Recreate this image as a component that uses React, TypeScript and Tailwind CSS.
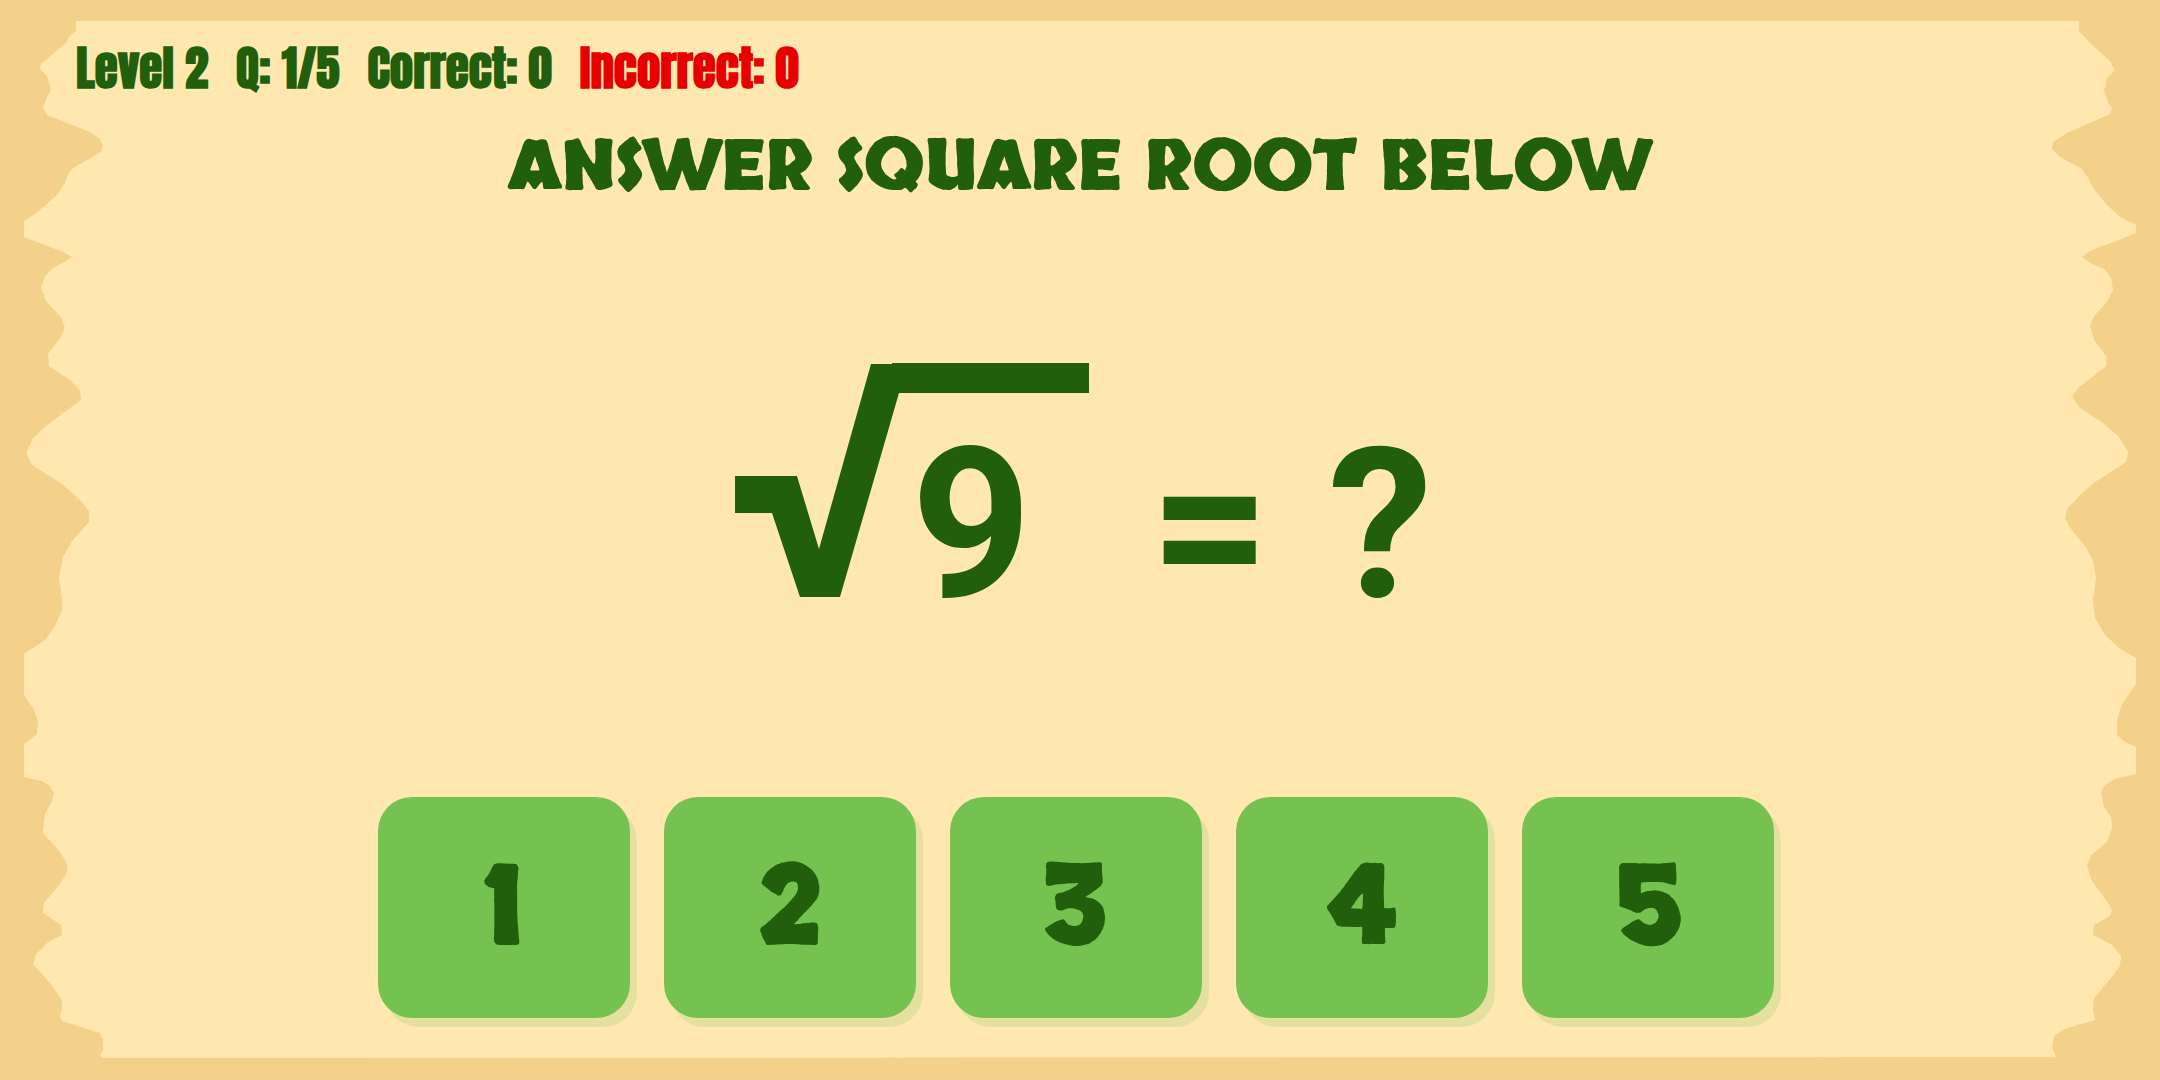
const LEFT_EDGE =
  "76,21 76,31 69,37 66,43 41,64 40,69 47,76 49,83 51,90 47,97 43,108 47,115 90,132 100,139 103,146 101,152 73,168 68,174 65,183 57,195 35,214 24,221 24,237 53,248 65,253 72,257 66,261 53,268 45,276 41,288 46,301 61,317 65,328 61,337 48,354 49,366 70,380 80,390 81,400 62,414 45,427 33,438 26,453 32,465 62,484 80,500 89,511 89,522 72,541 63,557 59,578 62,598 62,610 55,626 45,640 24,654 24,695 33,708 38,721 37,734 24,744 24,777 42,781 50,786 54,793 52,801 45,814 43,833 60,852 67,864 67,872 60,884 44,903 43,913 61,925 62,935 47,943 36,954 33,964 50,983 62,1000 62,1008 60,1017 62,1021 100,1033 103,1040 103,1050 100,1056 104,1058";

const RIGHT_EDGE =
  "2056,1057 2052,1047 2054,1036 2064,1029 2095,1020 2093,1010 2094,998 2110,979 2120,966 2121,956 2112,945 2093,935 2094,925 2110,916 2112,910 2106,900 2092,881 2087,866 2091,855 2107,842 2112,828 2111,817 2104,807 2101,792 2105,785 2115,779 2136,774 2136,747 2125,742 2117,735 2117,720 2122,704 2136,684 2136,658 2120,649 2105,635 2095,618 2093,600 2096,578 2093,561 2085,546 2070,528 2065,518 2067,509 2080,495 2095,482 2126,462 2128,452 2119,437 2103,423 2080,408 2072,397 2078,388 2091,378 2106,366 2107,357 2094,340 2090,326 2094,316 2107,302 2113,290 2111,278 2104,269 2090,263 2082,257 2090,251 2108,244 2136,233 2136,225 2120,217 2106,204 2093,188 2088,178 2082,169 2060,157 2052,149 2053,142 2067,133 2110,114 2112,108 2108,103 2104,90 2107,78 2115,70 2110,61 2092,45 2079,31 2079,21";

const ANSWERS = [1, 2, 3, 4, 5];

function Parchment() {
  return (
    <svg
      className="absolute inset-0 -z-10 h-full w-full"
      viewBox="0 0 2160 1080"
      preserveAspectRatio="none"
      aria-hidden="true"
    >
      <polygon points={`${LEFT_EDGE} ${RIGHT_EDGE}`} fill="#ffe8b0" />
    </svg>
  );
}

function ScoreBar() {
  return (
    <header className="flex gap-7 whitespace-nowrap px-[76px] pt-9 font-['Anton','Roboto_Condensed',sans-serif] text-[47px] font-bold leading-[64px]">
      <span>Level 2</span>
      <span>Q: 1/5</span>
      <span>Correct: 0</span>
      <span className="text-[#e60000]">Incorrect: 0</span>
    </header>
  );
}

function Equation() {
  return (
    <div className="flex items-end justify-center pl-2 font-['Roboto',sans-serif] text-[210px] font-bold leading-[248px]">
      <div className="relative mr-[58px] pl-[176px] pr-[60px]">
        <svg
          className="absolute bottom-[52px] left-0 h-[234px] w-[354px] fill-current"
          viewBox="735 363 354 234"
          role="img"
          aria-label="square root"
        >
          <polygon points="735,476 797,476 819,549 871,364 892,364 892,363 1089,363 1089,393 899,393 840,597 800,597 772,513 735,513" />
        </svg>
        <span>9</span>
      </div>
      <span className="mr-[58px]">=</span>
      <span>?</span>
    </div>
  );
}

export default function App() {
  return (
    <main className="relative isolate flex min-h-screen flex-col bg-[#f4d18b] text-[#225f0d]">
      <Parchment />
      <ScoreBar />
      <h1 className="mt-6 text-center font-['Skranji','Open_Sans',sans-serif] text-[69px] font-bold leading-[88px]">
        ANSWER SQUARE ROOT BELOW
      </h1>
      <section className="flex grow flex-col justify-center pt-10" aria-label="Question">
        <Equation />
      </section>
      <div className="mb-[62px] flex justify-center gap-[34px] pr-2">
        {ANSWERS.map((answer) => (
          <button
            key={answer}
            type="button"
            className="h-[221px] w-[252px] cursor-pointer rounded-[34px] bg-[#75c251] pt-1 font-['Skranji','Open_Sans',sans-serif] text-[112px] font-bold leading-none shadow-[7px_9px_0_#e5e0a0]"
          >
            {answer}
          </button>
        ))}
      </div>
    </main>
  );
}
